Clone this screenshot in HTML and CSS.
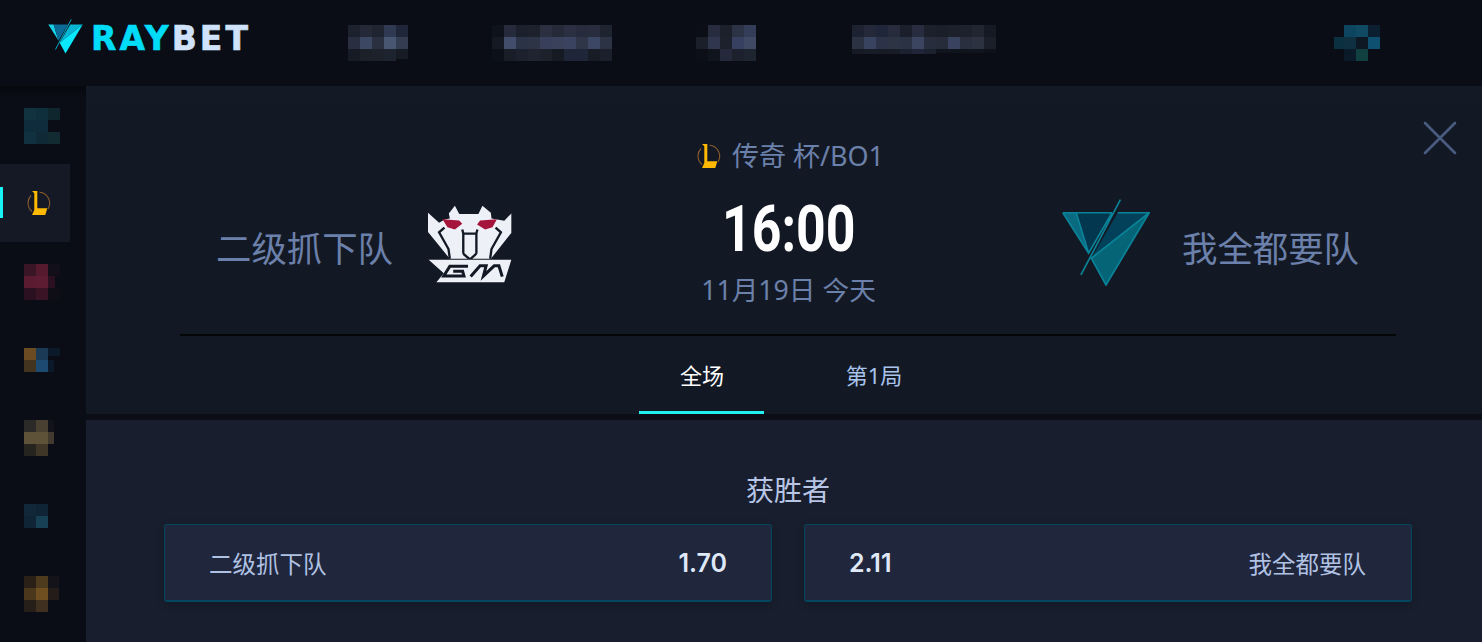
FILE: index.html
```html
<!DOCTYPE html>
<html lang="zh-CN">
<head>
    <meta charset="UTF-8" />
    <meta name="viewport" content="width=device-width, initial-scale=1.0"/>
    <title>RAYBET</title>
    <link rel="stylesheet" href="styles.css">
</head>
<body>
<svg class="defs" width="0" height="0">
    <symbol id="lol" viewBox="0 0 24 24">
        <path d="M4 4.5A11 11 0 0 0 5 20.5M12.5 1.3A11 11 0 0 1 21 18" fill="none" stroke="#8a5a2c" stroke-width="1.1"/>
        <path d="M5 0H10.3V17.3H20.3L18.3 24H5L7.3 19V2.3Z" fill="#ffb900"/>
    </symbol>
</svg>

<!-- 顶部导航 -->
<header class="topbar">
    <div class="logo">
        <svg class="logo-mark" width="35" height="35" viewBox="66 26 262 260">
            <path d="M68 67H108L145 188Z" fill="#17cfe6"/>
            <path d="M108 67H215L145 188Z" fill="#0b6a96"/>
            <path d="M232 67H326L153 203Z" fill="#07b4d2"/>
            <path d="M153 203L326 67L197 283Z" fill="#0ae8fb"/>
            <path d="M240 28L122 253" stroke="#0ad0e8" stroke-width="6"/>
        </svg>
        <span class="logo-text">RAY<span class="logo-bet">BET</span></span>
    </div>
    <!-- 打码的导航文字 -->
    <nav class="nav">
        <svg class="mosaic" width="60" height="36" shape-rendering="crispEdges">
            <rect width="12" height="12" fill="#1c212e"/><rect x="12" width="12" height="12" fill="#232936"/><rect x="24" width="12" height="12" fill="#1f2431"/><rect x="36" width="12" height="12" fill="#2f3a52"/><rect x="48" width="12" height="12" fill="#20263a"/>
            <rect y="12" width="12" height="12" fill="#292f40"/><rect x="12" y="12" width="12" height="12" fill="#3c4763"/><rect x="24" y="12" width="12" height="12" fill="#2a3040"/><rect x="36" y="12" width="12" height="12" fill="#495672"/><rect x="48" y="12" width="12" height="12" fill="#343c52"/>
            <rect y="24" width="12" height="12" fill="#161b25"/><rect x="12" y="24" width="12" height="12" fill="#1b2029"/><rect x="24" y="24" width="12" height="12" fill="#1c212c"/><rect x="36" y="24" width="12" height="12" fill="#1e2330"/><rect x="48" y="24" width="12" height="10" fill="#171c24"/>
        </svg>
        <svg class="mosaic" width="120" height="36" shape-rendering="crispEdges">
            <rect width="12" height="12" fill="#0e121b"/><rect x="12" width="12" height="12" fill="#252b3a"/><rect x="24" width="12" height="12" fill="#1b202c"/><rect x="36" width="12" height="12" fill="#1c212c"/><rect x="48" width="12" height="12" fill="#2a3040"/><rect x="60" width="12" height="12" fill="#252a38"/><rect x="72" width="12" height="12" fill="#2a3042"/><rect x="84" width="12" height="12" fill="#262c3b"/><rect x="96" width="12" height="12" fill="#272d3c"/><rect x="108" width="12" height="12" fill="#1e2330"/>
            <rect y="12" width="12" height="12" fill="#141923"/><rect x="12" y="12" width="12" height="12" fill="#414d6b"/><rect x="24" y="12" width="12" height="12" fill="#2b3447"/><rect x="36" y="12" width="12" height="12" fill="#2d3446"/><rect x="48" y="12" width="12" height="12" fill="#383f5a"/><rect x="60" y="12" width="12" height="12" fill="#3a415a"/><rect x="72" y="12" width="12" height="12" fill="#3a4460"/><rect x="84" y="12" width="12" height="12" fill="#2e3648"/><rect x="96" y="12" width="12" height="12" fill="#3b4765"/><rect x="108" y="12" width="12" height="12" fill="#2b3344"/>
            <rect y="24" width="12" height="12" fill="#0c1018"/><rect x="12" y="24" width="12" height="12" fill="#181d28"/><rect x="24" y="24" width="12" height="12" fill="#1c212d"/><rect x="36" y="24" width="12" height="12" fill="#1f2430"/><rect x="48" y="24" width="12" height="12" fill="#1c212c"/><rect x="60" y="24" width="12" height="12" fill="#151a23"/><rect x="72" y="24" width="12" height="12" fill="#20263a"/><rect x="84" y="24" width="12" height="12" fill="#20263a"/><rect x="96" y="24" width="12" height="12" fill="#181c27"/><rect x="108" y="24" width="12" height="12" fill="#1c202c"/>
        </svg>
        <svg class="mosaic" width="60" height="36" shape-rendering="crispEdges">
            <rect width="12" height="12" fill="#0b0e16"/><rect x="12" width="12" height="12" fill="#262c3d"/><rect x="24" width="12" height="12" fill="#1b202b"/><rect x="36" width="12" height="12" fill="#2b3344"/><rect x="48" width="12" height="12" fill="#343d57"/>
            <rect y="12" width="12" height="12" fill="#1a1f2a"/><rect x="12" y="12" width="12" height="12" fill="#2f364e"/><rect x="24" y="12" width="12" height="12" fill="#1c212c"/><rect x="36" y="12" width="12" height="12" fill="#374060"/><rect x="48" y="12" width="12" height="12" fill="#3f4963"/>
            <rect y="24" width="12" height="12" fill="#0c0f17"/><rect x="12" y="24" width="12" height="12" fill="#10141c"/><rect x="24" y="24" width="12" height="12" fill="#242a3c"/><rect x="36" y="24" width="12" height="12" fill="#1c212d"/><rect x="48" y="24" width="12" height="12" fill="#1e2430"/>
        </svg>
        <svg class="mosaic mosaic-wide" width="144" height="36" shape-rendering="crispEdges">
            <rect width="12" height="12" fill="#1d2230"/><rect x="12" width="12" height="12" fill="#232938"/><rect x="24" width="12" height="12" fill="#20263a"/><rect x="36" width="12" height="12" fill="#272c3d"/><rect x="48" width="12" height="12" fill="#1a1f2b"/><rect x="60" width="12" height="12" fill="#272d3e"/><rect x="72" width="12" height="12" fill="#1b202b"/><rect x="84" width="12" height="12" fill="#191e28"/><rect x="96" width="12" height="12" fill="#1b202b"/><rect x="108" width="12" height="12" fill="#1c212c"/><rect x="120" width="12" height="12" fill="#20252f"/><rect x="132" width="12" height="12" fill="#141923"/>
            <rect y="12" width="12" height="12" fill="#2b3242"/><rect x="12" y="12" width="12" height="12" fill="#384360"/><rect x="24" y="12" width="12" height="12" fill="#2c3348"/><rect x="36" y="12" width="12" height="12" fill="#2d3444"/><rect x="48" y="12" width="12" height="12" fill="#2b3244"/><rect x="60" y="12" width="12" height="12" fill="#3b4560"/><rect x="72" y="12" width="12" height="12" fill="#272d3c"/><rect x="84" y="12" width="12" height="12" fill="#262c3a"/><rect x="96" y="12" width="12" height="12" fill="#394360"/><rect x="108" y="12" width="12" height="12" fill="#292f3e"/><rect x="120" y="12" width="12" height="12" fill="#2c3240"/><rect x="132" y="12" width="12" height="12" fill="#1a1f29"/>
            <rect y="24" width="12" height="5" fill="#161a24"/><rect x="12" y="24" width="12" height="5" fill="#181c27"/><rect x="24" y="24" width="12" height="5" fill="#171b26"/><rect x="36" y="24" width="12" height="5" fill="#181c27"/><rect x="48" y="24" width="12" height="5" fill="#1c2130"/><rect x="60" y="24" width="12" height="5" fill="#20253a"/><rect x="72" y="24" width="12" height="5" fill="#1c2130"/><rect x="84" y="24" width="12" height="4" fill="#10141c"/><rect x="96" y="24" width="12" height="4" fill="#10141c"/><rect x="108" y="24" width="12" height="4" fill="#10141c"/><rect x="120" y="24" width="12" height="4" fill="#10141c"/><rect x="132" y="24" width="12" height="4" fill="#0e1119"/>
        </svg>
    </nav>
    <svg class="mosaic account" width="46" height="36" shape-rendering="crispEdges">
        <rect x="10" width="12" height="12" fill="#0d4560"/><rect x="22" width="12" height="12" fill="#0f4a62"/><rect x="34" width="12" height="12" fill="#0b1f30"/>
        <rect y="12" width="10" height="12" fill="#0b3040"/><rect x="10" y="12" width="12" height="12" fill="#0f3040"/><rect x="22" y="12" width="12" height="12" fill="#0d1824"/><rect x="34" y="12" width="12" height="12" fill="#0d5070"/>
        <rect x="10" y="24" width="12" height="12" fill="#0b1a28"/><rect x="22" y="24" width="12" height="12" fill="#10403f"/>
    </svg>
</header>

<div class="layout">
    <!-- 左侧游戏列表 -->
    <aside class="sidebar">
        <div class="side-item">
            <svg class="mosaic" width="36" height="36" shape-rendering="crispEdges">
                <rect width="12" height="12" fill="#11323f"/><rect x="12" width="12" height="12" fill="#0f2f3d"/><rect x="24" width="12" height="12" fill="#10262f"/>
                <rect y="12" width="12" height="12" fill="#0f2c3c"/><rect x="12" y="12" width="12" height="12" fill="#0f2c3c"/>
                <rect y="24" width="12" height="12" fill="#113040"/><rect x="12" y="24" width="12" height="12" fill="#0f2a36"/><rect x="24" y="24" width="12" height="12" fill="#122a32"/>
            </svg>
        </div>
        <div class="side-item active">
            <svg class="side-icon" width="24" height="24"><use href="#lol"/></svg>
        </div>
        <div class="side-item">
            <svg class="mosaic" width="36" height="36" shape-rendering="crispEdges">
                <rect width="12" height="12" fill="#3a1526"/><rect x="12" width="12" height="12" fill="#551a2e"/><rect x="24" width="12" height="12" fill="#120f1a"/>
                <rect y="12" width="12" height="12" fill="#5a1a30"/><rect x="12" y="12" width="12" height="12" fill="#5e1c32"/><rect x="24" y="12" width="7" height="12" fill="#2a1020"/>
                <rect y="24" width="12" height="12" fill="#2a1020"/><rect x="12" y="24" width="12" height="12" fill="#3a1425"/><rect x="24" y="24" width="12" height="12" fill="#0f0d16"/>
            </svg>
        </div>
        <div class="side-item">
            <svg class="mosaic" width="36" height="24" shape-rendering="crispEdges">
                <rect width="12" height="12" fill="#6b4c22"/><rect x="12" width="12" height="12" fill="#1a3a55"/><rect x="24" width="12" height="8" fill="#0a1a2a"/>
                <rect y="12" width="12" height="12" fill="#43341f"/><rect x="12" y="12" width="12" height="12" fill="#1d4a70"/><rect x="24" y="12" width="6" height="12" fill="#0a1a2a"/>
            </svg>
        </div>
        <div class="side-item">
            <svg class="mosaic" width="36" height="36" shape-rendering="crispEdges">
                <rect width="12" height="12" fill="#2b2a28"/><rect x="12" width="12" height="12" fill="#4a4032"/><rect x="24" width="6" height="12" fill="#12131a"/>
                <rect y="12" width="12" height="12" fill="#5e5238"/><rect x="12" y="12" width="12" height="12" fill="#5e5238"/><rect x="24" y="12" width="6" height="12" fill="#423a2e"/>
                <rect y="24" width="12" height="12" fill="#26241f"/><rect x="12" y="24" width="12" height="12" fill="#403628"/>
            </svg>
        </div>
        <div class="side-item">
            <svg class="mosaic" width="24" height="24" shape-rendering="crispEdges">
                <rect width="12" height="12" fill="#10283a"/><rect x="12" width="12" height="12" fill="#0f2536"/>
                <rect y="12" width="12" height="12" fill="#0f2536"/><rect x="12" y="12" width="12" height="12" fill="#174055"/>
            </svg>
        </div>
        <div class="side-item">
            <svg class="mosaic" width="36" height="36" shape-rendering="crispEdges">
                <rect width="12" height="12" fill="#2a2018"/><rect x="12" width="12" height="12" fill="#4e3a1c"/><rect x="24" width="11" height="12" fill="#14131a"/>
                <rect y="12" width="12" height="12" fill="#4b381c"/><rect x="12" y="12" width="12" height="12" fill="#6f4f20"/><rect x="24" y="12" width="11" height="12" fill="#231c18"/>
                <rect y="24" width="12" height="12" fill="#261e18"/><rect x="12" y="24" width="12" height="12" fill="#3f3020"/>
            </svg>
        </div>
    </aside>

    <main class="main">
        <!-- 比赛信息 -->
        <section class="match">
            <svg class="close" width="34" height="34" viewBox="0 0 34 34">
                <path d="M2 2L32 32M32 2L2 32" stroke="#4a5b80" stroke-width="2.6" stroke-linecap="round"/>
            </svg>

            <div class="league">
                <svg width="24" height="24"><use href="#lol"/></svg>
                <span>传奇 杯/BO1</span>
            </div>

            <div class="teams">
                <div class="team team-left">
                    <span class="team-name">二级抓下队</span>
                    <svg class="team-logo logo-gm" width="84" height="78" viewBox="85 45 250 232">
                        <path d="M85 68L118 98L135 88L150 85L147 70L165 47L178 72H235L247 47L272 68L274 85L312 92L333 70V128L272 205H150L85 125Z" fill="#eef0f8"/>
                        <path d="M128 87L178 91L187 101L165 118L143 111Z" fill="#a5143a"/>
                        <path d="M290 87L240 91L231 103L255 118L277 111Z" fill="#a5143a"/>
                        <path d="M134 112L118 126L146 176L150 205M286 112L302 126L274 176L270 205M187 118L190 130V190M232 118L229 130V190M190 130H229M190 190L210 207L229 190" fill="none" stroke="#131924" stroke-width="7"/>
                        <path d="M87 208H333L312 275H110L132 248Z" fill="#eef0f8"/>
                        <path d="M204 227H150L132 256H192L188 242H160M212 258L240 226H258L250 256L282 226H296L306 258" fill="none" stroke="#131924" stroke-width="9"/>
                    </svg>
                </div>
                <div class="center">
                    <div class="time">16:00</div>
                    <div class="date">11月19日 今天</div>
                </div>
                <div class="team team-right">
                    <svg class="team-logo logo-v" width="88" height="87" viewBox="66 26 262 260">
                        <path d="M68 67H108L145 188Z" fill="#0a6a80"/>
                        <path d="M108 67H215L145 188Z" fill="#03374f"/>
                        <path d="M232 67H326L153 203Z" fill="#03405a"/>
                        <path d="M153 203L326 67L197 283Z" fill="#056577"/>
                        <path d="M108 67L145 188M68 67H215M232 67H326L197 283L153 203L326 67M68 67L145 188L215 67M240 28L122 253" fill="none" stroke="#0a8398" stroke-width="5"/>
                    </svg>
                    <span class="team-name">我全都要队</span>
                </div>
            </div>

            <div class="tabs">
                <div class="tab active">全场</div>
                <div class="tab">第1局</div>
            </div>
        </section>

        <!-- 盘口 -->
        <section class="market">
            <h3 class="market-title">获胜者</h3>
            <div class="odds">
                <div class="odd-card">
                    <span class="odd-name">二级抓下队</span>
                    <span class="odd-num">1.70</span>
                </div>
                <div class="odd-card">
                    <span class="odd-num">2.11</span>
                    <span class="odd-name">我全都要队</span>
                </div>
            </div>
        </section>
    </main>
</div>
</body>
</html>
```

FILE: styles.css
```css
* {
    box-sizing: border-box;
}
html, body {
    margin: 0;
    height: 100%;
    overflow: hidden;
}
body {
    background: #0a0d15;
    font-family: "Noto Sans", "Noto Sans CJK SC", sans-serif;
}
.defs {
    position: absolute;
}
.mosaic {
    display: block;
    flex: none;
}

/* 顶部导航 */
.topbar {
    height: 86px;
    display: flex;
    align-items: center;
    padding: 0 102px 0 48px;
    background: #0a0d15;
}
.logo {
    width: 202px;
    display: flex;
    align-items: center;
    gap: 8px;
}
.logo-mark {
    margin-bottom: 14px;
    flex: none;
}
.logo-text {
    font-family: "DejaVu Sans", sans-serif;
    font-size: 33px;
    font-weight: 700;
    line-height: 36px;
    letter-spacing: 3px;
    -webkit-text-stroke: 0.6px currentColor;
    color: #00dcf8;
    margin-bottom: 8px;
}
.logo-bet {
    color: #cfe2fa;
}
.nav {
    display: flex;
    gap: 84px;
    margin-left: 98px;
}
.mosaic-wide {
    margin-left: 12px;
}
.account {
    margin-left: auto;
}

/* 布局 */
.layout {
    display: flex;
    height: 556px;
}
.sidebar {
    width: 86px;
    flex: none;
    background: linear-gradient(#06080e, #0a0d15 12px);
}
.side-item {
    width: 70px;
    height: 78px;
    display: flex;
    align-items: center;
    padding: 2px 0 0 24px;
    position: relative;
}
.side-item.active {
    background: #141925;
    padding: 0 0 0 27px;
}
.side-item.active::before {
    content: "";
    position: absolute;
    left: 0;
    top: 23px;
    width: 3px;
    height: 31px;
    background: #19f3f5;
}

.main {
    flex: 1;
    display: flex;
    flex-direction: column;
}

/* 比赛信息 */
.match {
    position: relative;
    height: 334px;
    padding: 55px 86px 0 94px;
    background: linear-gradient(#141a25, #131924 30px);
    border-bottom: 6px solid #0b0e16;
}
.close {
    position: absolute;
    top: 35px;
    right: 25px;
}
.league {
    display: flex;
    align-items: center;
    justify-content: center;
    gap: 11px;
    height: 30px;
    padding-left: 5px;
    font-size: 27px;
    line-height: 30px;
    color: #6b80aa;
}
.teams {
    display: flex;
    height: 119px;
    margin-top: 17px;
}
.team {
    flex: 1 1 0;
    display: flex;
    align-items: center;
    font-size: 35.4px;
    color: #6b80aa;
}
.team-left {
    gap: 35px;
    padding-left: 36px;
}
.team-right {
    justify-content: flex-end;
    gap: 32px;
    padding-right: 37px;
}
.team-name {
    line-height: 44px;
}
.team-logo {
    flex: none;
}
.logo-gm {
    margin-bottom: 8px;
}
.logo-v {
    margin-bottom: 11px;
}
.center {
    width: 416px;
    flex: none;
    text-align: center;
}
.time {
    font-family: "Roboto", sans-serif;
    font-size: 64px;
    font-weight: 700;
    line-height: 80px;
    color: #fff;
    transform: scaleX(0.81);
    padding: 2px 0 0 2px;
}
.date {
    font-size: 26.7px;
    line-height: 34px;
    margin-top: 3px;
    padding-left: 2px;
    color: #6b80aa;
}
.tabs {
    display: flex;
    justify-content: center;
    gap: 47px;
    margin-top: 27px;
    padding-right: 1px;
    border-top: 2px solid #040507;
}
.tab {
    width: 125px;
    height: 78px;
    line-height: 78px;
    text-align: center;
    font-size: 22px;
    padding-left: 1px;
    color: #a9c4ec;
    border-bottom: 3px solid transparent;
}
.tab.active {
    color: #fff;
    border-bottom-color: #21f0ee;
}

/* 盘口 */
.market {
    flex: 1;
    padding: 52px 70px 0 78px;
    background: #181e2d;
}
.market-title {
    margin: 0 0 16px;
    text-align: center;
    font-size: 28px;
    font-weight: 400;
    line-height: 36px;
    color: #b7c6e6;
}
.odds {
    display: grid;
    grid-template-columns: 1fr 1fr;
    gap: 32px;
}
.odd-card {
    height: 78px;
    display: flex;
    align-items: center;
    justify-content: space-between;
    padding: 0 45px 0 44px;
    background: #20263c;
    border: 1px solid #03465f;
    border-bottom-width: 2px;
    border-radius: 3px;
    box-shadow: 0 2px 8px rgba(0, 0, 0, 0.2);
}
.odd-card:first-child {
    padding: 0 44px 0 44px;
}
.odd-name {
    font-size: 23.5px;
    color: #b0c2e4;
}
.odd-num {
    font-family: "Inter", sans-serif;
    font-size: 25px;
    font-weight: 600;
    color: #dfe8f8;
}
```
